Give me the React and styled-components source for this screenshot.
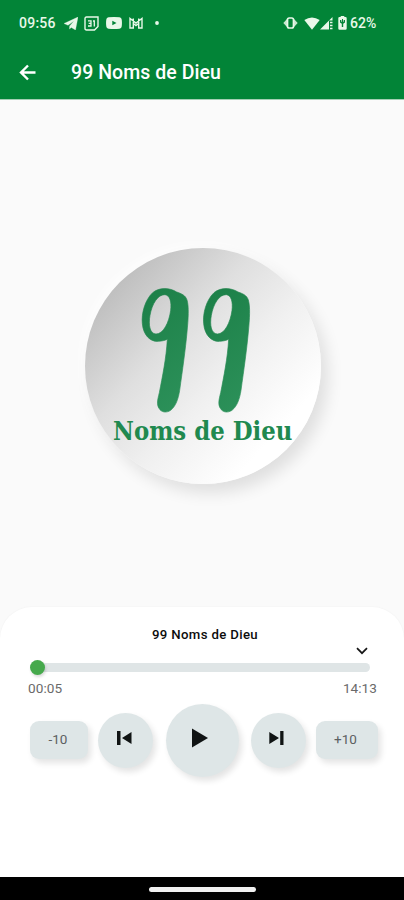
import React from "react";
import styled, { createGlobalStyle } from "styled-components";

const Global = createGlobalStyle`
  * { box-sizing: border-box; }
  body { margin: 0; background: #fafafa; font-family: Roboto, "Liberation Sans", sans-serif; }
  button { border: 0; padding: 0; background: none; font: inherit; color: inherit; }
  svg { display: block; flex: none; }
`;

const Screen = styled.div`
  width: 404px;
  height: 900px;
  display: flex;
  flex-direction: column;
  background: #fafafa;
  overflow: hidden;
`;

const Header = styled.header`
  height: 100px;
  flex: none;
  background: #028437;
  color: #fff;
  border-bottom: 1px solid #a5cfb4;
`;

const StatusBar = styled.div`
  height: 46px;
  display: flex;
  align-items: center;
  justify-content: space-between;
  padding: 0 27px 0 19px;
  color: #e9f8e9;
`;

const StatusGroup = styled.div`
  display: flex;
  align-items: center;
`;

const Clock = styled.span`
  width: 45px;
  font: 500 14px/16px Roboto, sans-serif;
  letter-spacing: 0.25px;
`;

const Battery = styled.span`
  width: 27px;
  margin-left: 3px;
  font: 500 14px/16px Roboto, sans-serif;
  white-space: nowrap;
`;

const Glyph = styled.svg`
  width: ${(p) => p.$w}px;
  height: ${(p) => p.$h}px;
  margin-left: ${(p) => p.$gap || 0}px;
  fill: currentColor;
`;

const AppBar = styled.div`
  height: 53px;
  display: flex;
  align-items: center;
  padding-left: 19px;
  gap: 34px;
`;

const Title = styled.h1`
  margin: 1px 0 0;
  font: 500 19.5px/24px Roboto, sans-serif;
  letter-spacing: 0.06px;
`;

const Stage = styled.main`
  height: 507px;
  flex: none;
  display: flex;
  justify-content: center;
  padding: 148px 0 0 2px;
`;

const Disc = styled.div`
  width: 236px;
  height: 236px;
  border-radius: 50%;
  background: linear-gradient(133deg, #bcbcbc 12%, #dfdfdf 38%, #f0f0f0 57%, #ffffff 80%);
  box-shadow: 7px 9px 16px rgba(0, 0, 0, 0.11), -3px -3px 12px rgba(255, 255, 255, 0.8);
`;

const Art = styled.svg`
  width: 236px;
  height: 236px;
  text { font: bold 77px "DejaVu Serif", serif; }
`;

const Player = styled.section`
  flex: 1;
  display: flex;
  flex-direction: column;
  background: #fff;
  border-radius: 32px 32px 0 0;
  padding: 19px 26px 0 28px;
  box-shadow: 0 0 2px rgba(0, 0, 0, 0.05);
`;

const Track = styled.h2`
  margin: 0 0 0 4px;
  height: 18px;
  text-align: center;
  font: 500 13.2px/18px Roboto, sans-serif;
  letter-spacing: 0.35px;
  color: #0c0c0c;
`;

const Expand = styled.button`
  align-self: flex-end;
  margin-right: 10px;
  height: 16px;
  display: flex;
  align-items: center;
  padding-bottom: 3px;
`;

const Slider = styled.div`
  height: 15px;
  margin: 0 8px 0 2px;
  display: flex;
  align-items: center;
`;

const Thumb = styled.span`
  width: 15px;
  height: 15px;
  flex: none;
  border-radius: 50%;
  background: #46a94c;
  box-shadow: 1px 2px 3px rgba(0, 0, 0, 0.15);
  z-index: 1;
`;

const Rail = styled.span`
  flex: 1;
  height: 9px;
  margin-left: -7px;
  border-radius: 0 5px 5px 0;
  background: #dfe5e6;
`;

const Times = styled.div`
  display: flex;
  justify-content: space-between;
  margin-top: 5px;
  margin-right: 1px;
  font-size: 13.6px;
  line-height: 16px;
  letter-spacing: 0.05px;
  color: #6a6a6a;
`;

const Controls = styled.div`
  display: flex;
  align-items: center;
  justify-content: space-between;
  height: 74px;
  margin: 7px 0 0 2px;
`;

const ControlButton = styled.button`
  display: flex;
  align-items: center;
  justify-content: center;
  background: #dee6e7;
  box-shadow: 3px 4px 6px rgba(0, 0, 0, 0.11);
`;

const Skip = styled(ControlButton)`
  width: ${(p) => p.$w}px;
  height: 38px;
  padding: 0 ${(p) => p.$shift || 0}px 3px 0;
  border-radius: 9px;
  color: #5c6062;
  font-size: 13.5px;
`;

const Round = styled(ControlButton)`
  width: ${(p) => p.$size}px;
  height: ${(p) => p.$size}px;
  border-radius: 50%;
  margin-left: ${(p) => p.$nudge || 0}px;
  margin-right: ${(p) => -(p.$nudge || 0)}px;
  padding: 0 ${(p) => p.$shift || 0}px 4px 0;
`;

const NavBar = styled.footer`
  height: 23px;
  flex: none;
  display: flex;
  justify-content: center;
  align-items: center;
  padding-left: 1px;
  background: #000;
`;

const HomePill = styled.span`
  width: 107px;
  height: 5px;
  margin-top: 1px;
  border-radius: 3px;
  background: #f1f1f1;
`;

const Nine = ({ x = 0 }) => (
  <path
    transform={`translate(${x} 0)`}
    fillRule="evenodd"
    d="M320 170C300 157 268 155 248 172C224 195 214 235 217 265C220 300 241 320 265 318C278 317 287 315 292 311C289 368 277 425 268 472C262 495 260 508 267 519C274 532 290 533 302 525C318 512 325 490 329 465C338 400 346 345 351 290C355 250 357 214 351 194C346 179 334 175 320 170ZM285 178C300 180 305 200 302 225C297 262 280 296 258 296C239 295 235 268 240 240C246 205 264 177 285 178Z"
  />
);

export default function App() {
  return (
    <>
      <Global />
      <Screen>
        <Header>
          <StatusBar>
            <StatusGroup>
              <Clock>09:56</Clock>
              <Glyph viewBox="0 0 14 13" $w={14} $h={13}>
                <path d="M14 0 0 6.5 4 8.3 10 4 5.6 9 5.5 12 7.3 10.5 11.5 13Z" stroke="currentColor" strokeWidth=".3" />
              </Glyph>
              <Glyph viewBox="0 0 15 15" $w={15} $h={15} $gap={6}>
                <path d="M2.5 1H14V10.5L10.5 14H2.5Q1 14 1 12.5V2.5Q1 1 2.5 1Z" fill="none" stroke="currentColor" strokeWidth="1.4" />
                <path d="M4 4.8H7V10H4M4.7 7.3H7M9 5H10.3V10.5" fill="none" stroke="currentColor" strokeWidth="1.3" />
              </Glyph>
              <Glyph viewBox="0 0 16 12" $w={16} $h={12} $gap={7}>
                <path fillRule="evenodd" d="M2.5 0.3Q8-.3 13.5.3Q15.5.5 15.7 2.5Q16.2 6 15.7 9.5Q15.5 11.5 13.5 11.7Q8 12.2 2.5 11.7Q.5 11.5.3 9.5Q-.2 6 .3 2.5Q.5.5 2.5.3ZM6.3 3.7V8.3L10.5 6Z" />
              </Glyph>
              <Glyph viewBox="0 0 14 12" $w={14} $h={12} $gap={7}>
                <path d="M1 11V1.5L7 6 13 1.5V11H9.7V6.5L7 8.6 4.3 6.5V11ZM4.3 6.5V1.6M9.7 6.5V1.6" fill="none" stroke="currentColor" strokeWidth="1.4" />
              </Glyph>
              <Glyph viewBox="0 0 4 4" $w={4} $h={4} $gap={12}>
                <circle cx="2" cy="2" r="1.9" />
              </Glyph>
            </StatusGroup>
            <StatusGroup>
              <Glyph viewBox="0 0 15 12" $w={15} $h={12}>
                <path d="M4 2 .3 6 4 10ZM11 2 14.7 6 11 10Z" opacity=".85" />
                <rect x="4.5" y="1" width="6" height="10" rx="1.7" fill="none" stroke="currentColor" strokeWidth="1.7" />
              </Glyph>
              <Glyph viewBox="0 0 16 13" $w={16} $h={13} $gap={6}>
                <path d="M.3 3Q8-2 15.7 3L8 12.7Z" />
              </Glyph>
              <Glyph viewBox="0 0 13 13" $w={13} $h={13}>
                <path d="M0 12.5 12.5 0V3.5H9V12.5Z" />
                <path d="M10 5.5H12.5M10 8.5H12.5M10 11.5H12.5" stroke="currentColor" strokeWidth="1.3" />
              </Glyph>
              <Glyph viewBox="0 0 9 14" $w={9} $h={14} $gap={5}>
                <path fillRule="evenodd" d="M2.7 1V0H6.3V1H7.5Q8.7 1 8.7 2.3V12.5Q8.7 13.7 7.5 13.7H1.5Q.3 13.7.3 12.5V2.3Q.3 1 1.5 1ZM2 4V6.5L3.8 7.8V11H5.2V7.8L7 6.5V4H5.7V5.7H5V3H4V5.7H3.3V4Z" />
              </Glyph>
              <Battery>62%</Battery>
            </StatusGroup>
          </StatusBar>
          <AppBar>
            <Glyph viewBox="0 0 18 18" $w={18} $h={18}>
              <path d="M16.5 8.5H2.5M9 1.5 2 8.5 9 15.5" fill="none" stroke="currentColor" strokeWidth="2.4" />
            </Glyph>
            <Title>99 Noms de Dieu</Title>
          </AppBar>
        </Header>
        <Stage>
          <Disc>
            <Art viewBox="45 38 708 708">
              <defs>
                <linearGradient id="ink" gradientUnits="userSpaceOnUse" x1="216" y1="155" x2="540" y2="530">
                  <stop offset="0" stopColor="#1b7f47" />
                  <stop offset="1" stopColor="#339861" />
                </linearGradient>
              </defs>
              <g fill="url(#ink)" stroke="url(#ink)" strokeWidth="2">
                <Nine />
                <Nine x={184} />
              </g>
              <text x="129" y="614" textLength="538" lengthAdjust="spacingAndGlyphs" fill="#20894f">
                Noms de Dieu
              </text>
            </Art>
          </Disc>
        </Stage>
        <Player>
          <Track>99 Noms de Dieu</Track>
          <Expand aria-label="Expand">
            <Glyph viewBox="0 0 12 8" $w={12} $h={8}>
              <path d="M1 1.2 6 6.2 11 1.2" fill="none" stroke="#161616" strokeWidth="1.7" />
            </Glyph>
          </Expand>
          <Slider>
            <Thumb />
            <Rail />
          </Slider>
          <Times>
            <span>00:05</span>
            <span>14:13</span>
          </Times>
          <Controls>
            <Skip $w={58} $shift={2}>-10</Skip>
            <Round $size={55} $nudge={-1} $shift={3} aria-label="Previous">
              <Glyph viewBox="0 0 15 14" $w={15} $h={14}>
                <path d="M0 0H3.5V14H0ZM14.5 1V13L5 7Z" fill="#101414" />
              </Glyph>
            </Round>
            <Round $size={73} $shift={4} aria-label="Play">
              <Glyph viewBox="0 0 16 20" $w={16} $h={20}>
                <path d="M0 .5 16 10 0 19.5Z" fill="#101414" />
              </Glyph>
            </Round>
            <Round $size={55} $nudge={1} $shift={3} aria-label="Next">
              <Glyph viewBox="0 0 15 14" $w={15} $h={14}>
                <path d="M11.2 0H14.5V14H11.2ZM.3 1V13L10 7Z" fill="#101414" />
              </Glyph>
            </Round>
            <Skip $w={62} $shift={3}>+10</Skip>
          </Controls>
        </Player>
        <NavBar>
          <HomePill />
        </NavBar>
      </Screen>
    </>
  );
}
